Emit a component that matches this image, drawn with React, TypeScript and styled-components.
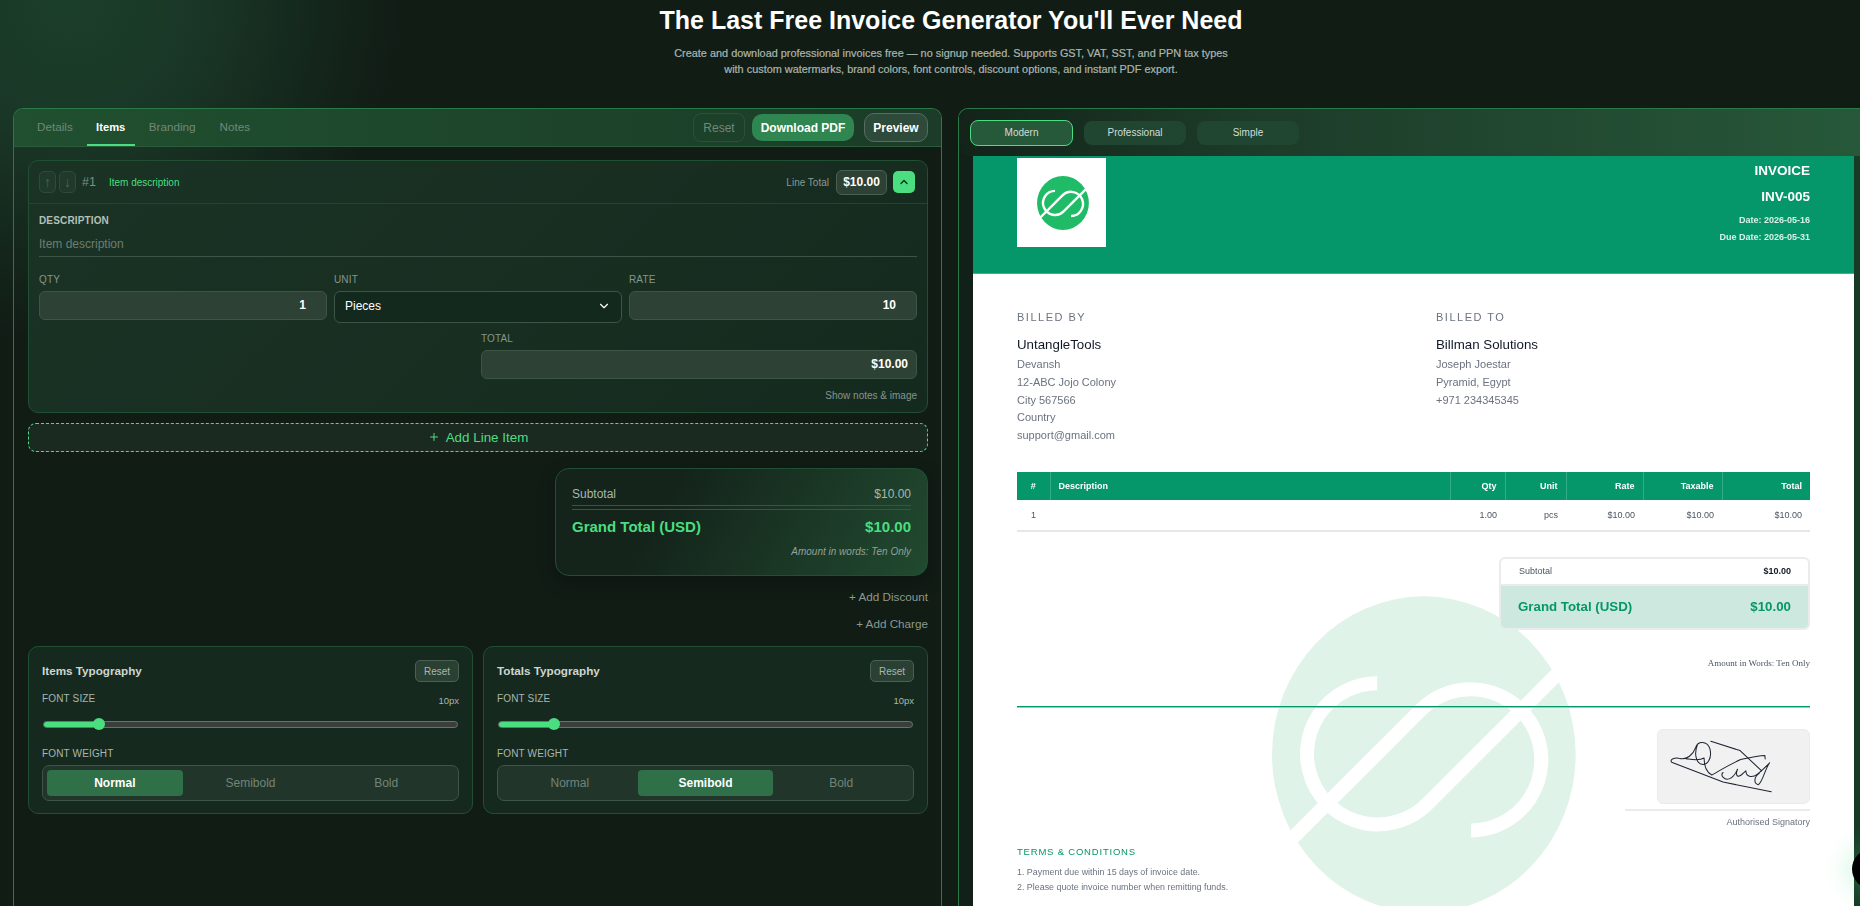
import styled, { createGlobalStyle } from 'styled-components'
import { ChevronDown, ChevronUp, Plus } from 'lucide-react'

const GlobalStyle = createGlobalStyle`
  html, body {
    margin: 0;
    height: 100%;
    overflow: hidden;
    background: #111c15;
  }
  * {
    box-sizing: border-box;
  }
  body {
    font-family: "Liberation Sans", Arial, sans-serif;
  }
`

const Page = styled.div`
  height: 100vh;
  display: flex;
  flex-direction: column;
  overflow: hidden;
  background:
    radial-gradient(ellipse 330px 340px at 70px 0, #1b3e2a 0%, #1a3827 35%, rgba(18, 30, 22, 0) 100%),
    #111c15;
`

const Hero = styled.header`
  height: 108px;
  flex: none;
  text-align: center;
  padding: 5px 0 0 42px;
`

const Title = styled.h1`
  margin: 0;
  font-size: 25px;
  line-height: 30px;
  font-weight: 700;
  color: #fff;
`

const Subtitle = styled.p`
  margin: 10px 0 0;
  font-size: 10.9px;
  line-height: 16px;
  font-weight: 400;
  color: #aab6ae;
  -webkit-text-stroke: 0.2px #aab6ae;
`

const Workspace = styled.main`
  flex: 1;
  min-height: 0;
  display: flex;
  gap: 16px;
  padding-left: 13px;
`

const EditorPanel = styled.section`
  width: 929px;
  flex: none;
  border: 1px solid #2a7a49;
  border-bottom: 0;
  border-radius: 10px 10px 0 0;
  overflow: hidden;
`

const TabBar = styled.div`
  height: 38px;
  display: flex;
  align-items: stretch;
  justify-content: space-between;
  padding: 0 13px;
  background: linear-gradient(90deg, #20502f, #1b3c28);
  border-bottom: 1px solid #2b5a3c;
`

const Tabs = styled.nav`
  display: flex;
  gap: 4px;
`

const Tab = styled.button<{ $active?: boolean }>`
  width: ${(p) => (p.$active ? '48px' : 'auto')};
  padding: ${(p) => (p.$active ? '0' : '0 10px')};
  background: none;
  border: 0;
  border-bottom: 2px solid ${(p) => (p.$active ? '#4ade80' : 'transparent')};
  font: ${(p) => (p.$active ? 700 : 400)} ${(p) => (p.$active ? '11.2px' : '11.7px')} "Liberation Sans", Arial, sans-serif;
  color: ${(p) => (p.$active ? '#fff' : '#71887a')};
`

const TabActions = styled.div`
  display: flex;
  align-items: center;
  gap: 7px;
`

const GhostButton = styled.button`
  width: 52px;
  height: 29px;
  border: 1px solid #2f4f3c;
  border-radius: 8px;
  background: none;
  font: 400 12px "Liberation Sans", Arial, sans-serif;
  color: #71887a;
`

const PrimaryButton = styled.button`
  width: 102px;
  height: 27px;
  border: 0;
  border-radius: 10px;
  background: #2f8650;
  font: 700 12px "Liberation Sans", Arial, sans-serif;
  color: #fff;
`

const PreviewButton = styled.button`
  width: 64px;
  height: 29px;
  margin-left: 3px;
  border: 1px solid #566d5f;
  border-radius: 10px;
  background: #2e4a3a;
  font: 700 12px "Liberation Sans", Arial, sans-serif;
  color: #fff;
`

const EditorBody = styled.div`
  padding: 13px 13px 13px 14px;
  display: flex;
  flex-direction: column;
`

const ItemCard = styled.article`
  border: 1px solid #214f34;
  border-radius: 10px;
  background: linear-gradient(135deg, #1a3325, #152a1e);
`

const ItemHead = styled.div`
  height: 43px;
  display: flex;
  align-items: center;
  padding: 0 12px 0 10px;
  border-bottom: 1px solid #254232;
`

const MoveButton = styled.span`
  width: 17px;
  height: 22px;
  margin-right: 3px;
  display: grid;
  place-items: center;
  border: 1px solid #2e4a3a;
  border-radius: 5px;
  background: #1f3a2a;
  font-size: 14px;
  color: #4f6558;
`

const ItemNumber = styled.span`
  margin-left: 3px;
  font-size: 12.5px;
  color: #7f8f85;
`

const ItemName = styled.span`
  margin-left: 13px;
  font-size: 10px;
  color: #4ade80;
`

const LineTotal = styled.div`
  margin-left: auto;
  display: flex;
  align-items: center;
`

const LineTotalLabel = styled.span`
  font-size: 10px;
  color: #8b998f;
`

const LineTotalValue = styled.span`
  width: 51px;
  height: 25px;
  margin-left: 7px;
  display: grid;
  place-items: center;
  border: 1px solid #4a6052;
  border-radius: 6px;
  background: #2d4135;
  font-size: 12px;
  font-weight: 700;
  color: #fff;
`

const CollapseButton = styled.span`
  width: 22px;
  height: 22px;
  margin-left: 6px;
  display: grid;
  place-items: center;
  border-radius: 5px;
  background: #4ade80;
  color: #0f2a1a;
`

const ItemBody = styled.div`
  padding: 11px 10px 10px;
`

const FieldLabel = styled.label<{ $strong?: boolean }>`
  display: block;
  font-size: 10px;
  line-height: 12px;
  font-weight: ${(p) => (p.$strong ? 700 : 400)};
  letter-spacing: 0.15px;
  color: ${(p) => (p.$strong ? '#b4c0b8' : '#87958c')};
`

const DescriptionInput = styled.div`
  height: 30px;
  padding-top: 10px;
  border-bottom: 1px solid #3d5547;
  font-size: 12px;
  line-height: 14px;
  color: #6d7d73;
`

const FieldGrid = styled.div`
  margin-top: 17px;
  display: grid;
  grid-template-columns: repeat(3, 1fr);
  column-gap: 7px;
  align-items: start;
`

const NumberField = styled.div`
  height: 29px;
  margin-top: 5px;
  padding: 0 20px 2px;
  display: flex;
  align-items: center;
  justify-content: flex-end;
  border: 1px solid #3d5546;
  border-radius: 6px;
  background: #2d4135;
  font-size: 12px;
  font-weight: 700;
  color: #fff;
`

const SelectField = styled.div`
  height: 32px;
  margin-top: 5px;
  padding: 0 10px 2px;
  display: flex;
  align-items: center;
  justify-content: space-between;
  border: 1px solid #3d5546;
  border-radius: 6px;
  background: #14291d;
  font-size: 12px;
  color: #fff;
`

const TotalField = styled.div`
  width: 436px;
  margin: 10px 0 0 auto;
`

const TotalValue = styled(NumberField)`
  padding: 0 8px 2px;
`

const NotesLink = styled.div`
  margin-top: 11px;
  text-align: right;
  font-size: 10px;
  line-height: 12px;
  color: #87958c;
`

const AddLineButton = styled.button`
  height: 29px;
  margin-top: 10px;
  padding-bottom: 2px;
  display: flex;
  align-items: center;
  justify-content: center;
  gap: 6px;
  border: 1px dashed #4ade80;
  border-radius: 8px;
  background: #1a2a20;
  font: 400 13.4px "Liberation Sans", Arial, sans-serif;
  color: #4ade80;
`

const TotalsCard = styled.div`
  width: 373px;
  height: 108px;
  margin: 16px 0 0 auto;
  padding: 18px 16px 0;
  border: 1px solid #214f34;
  border-radius: 14px;
  background: linear-gradient(120deg, #14241b 30%, #214a30);
  box-shadow: 0 6px 18px rgba(0, 0, 0, 0.25);
`

const TotalsRow = styled.div`
  display: flex;
  justify-content: space-between;
  font-size: 12px;
  line-height: 14px;
  color: #a9b6ae;
`

const TotalsRule = styled.div`
  height: 5px;
  margin-top: 4px;
  border-top: 1px solid #3a5345;
  border-bottom: 1px solid #3a5345;
`

const GrandRow = styled.div`
  margin-top: 8px;
  display: flex;
  justify-content: space-between;
  font-size: 15px;
  line-height: 18px;
  font-weight: 700;
  color: #4ade80;
`

const WordsRow = styled.div`
  margin-top: 10px;
  text-align: right;
  font-size: 10px;
  line-height: 12px;
  font-style: italic;
  color: #93a198;
`

const TextAction = styled.div<{ $gap: number }>`
  margin-top: ${(p) => p.$gap}px;
  text-align: right;
  font-size: 11.7px;
  line-height: 14px;
  color: #8b998f;
`

const TypographyGrid = styled.div`
  margin-top: 15px;
  display: grid;
  grid-template-columns: repeat(2, 1fr);
  column-gap: 10px;
`

const TypographyCard = styled.div`
  height: 168px;
  padding: 13px;
  border: 1px solid #214f34;
  border-radius: 10px;
  background: #16291e;
`

const TypographyHead = styled.div`
  height: 22px;
  display: flex;
  align-items: center;
  justify-content: space-between;
`

const TypographyTitle = styled.h3`
  margin: 0 0 1px;
  font-size: 11.7px;
  font-weight: 700;
  color: #cdd6d0;
`

const SmallReset = styled.button`
  width: 44px;
  height: 22px;
  border: 1px solid #4a6052;
  border-radius: 5px;
  background: #2a4033;
  font: 400 10px "Liberation Sans", Arial, sans-serif;
  color: #a9b6ae;
`

const SliderLabels = styled.div`
  margin-top: 11px;
  display: flex;
  justify-content: space-between;
  font-size: 10px;
  line-height: 12px;
  letter-spacing: 0.15px;
  color: #a9b6ae;
`

const SizeValue = styled.span`
  padding-top: 2px;
  font-size: 9.5px;
  letter-spacing: 0;
`

const Slider = styled.div`
  position: relative;
  height: 7px;
  margin: 14px 1px 0;
  border: 1px solid #6a726d;
  border-radius: 4px;
  background: #3a3f3c;
`

const SliderFill = styled.div<{ $value: number }>`
  width: ${(p) => p.$value}%;
  height: 100%;
  border-radius: 4px 0 0 4px;
  background: #4ade80;
`

const SliderThumb = styled.span<{ $value: number }>`
  position: absolute;
  top: -4px;
  left: ${(p) => p.$value}%;
  width: 12px;
  height: 12px;
  margin-left: -6px;
  border-radius: 50%;
  background: #4ade80;
`

const WeightLabel = styled(FieldLabel)`
  margin-top: 20px;
  color: #a9b6ae;
`

const Segments = styled.div`
  height: 36px;
  margin-top: 5px;
  padding: 4px;
  display: grid;
  grid-template-columns: repeat(3, 1fr);
  border: 1px solid #3d5546;
  border-radius: 7px;
  background: #22352a;
`

const Segment = styled.span<{ $active?: boolean }>`
  display: grid;
  place-items: center;
  border-radius: 4px;
  background: ${(p) => (p.$active ? '#2f7048' : 'transparent')};
  font-size: 12px;
  font-weight: ${(p) => (p.$active ? 700 : 400)};
  color: ${(p) => (p.$active ? '#fff' : '#718579')};
`

const PreviewPanel = styled.section`
  flex: 1;
  min-width: 0;
  display: flex;
  flex-direction: column;
  border: 1px solid #2a7a49;
  border-right: 0;
  border-bottom: 0;
  border-radius: 10px 0 0 0;
  background: linear-gradient(90deg, #112019, #173a25);
  overflow: hidden;
`

const TemplateBar = styled.div`
  height: 47px;
  flex: none;
  display: flex;
  align-items: center;
  gap: 11px;
  padding-left: 11px;
  background: linear-gradient(90deg, #13231a 0%, #1c3a28 30%, #27583a 100%);
  border-radius: 0 0 0 10px;
`

const TemplateChip = styled.button<{ $active?: boolean }>`
  width: ${(p) => (p.$active ? '103px' : '102px')};
  height: ${(p) => (p.$active ? '26px' : '24px')};
  border: ${(p) => (p.$active ? '1px solid #4ade80' : '0')};
  border-radius: 8px;
  background: ${(p) => (p.$active ? '#26583a' : '#204530')};
  font: 400 10px "Liberation Sans", Arial, sans-serif;
  color: #d4ddd7;
`

const Paper = styled.div`
  position: relative;
  flex: 1;
  min-height: 0;
  margin: 0 6px 0 14px;
  background: #fff;
  overflow: hidden;
`

const Watermark = styled.svg`
  position: absolute;
  left: 299px;
  top: 440px;
  width: 304px;
  height: 317px;
`

const PaperContent = styled.div`
  position: relative;
  z-index: 1;
`

const InvoiceHeader = styled.div`
  height: 118px;
  padding: 2px 44px 0;
  display: flex;
  justify-content: space-between;
  background: #059669;
  border-bottom: 1px solid #3fb18c;
`

const LogoBox = styled.div`
  width: 89px;
  height: 89px;
  padding-left: 3px;
  display: grid;
  place-items: center;
  background: #fff;
`

const LogoMark = styled.svg`
  width: 52px;
  height: 54px;
`

const InvoiceMeta = styled.div`
  padding-top: 6px;
  text-align: right;
  color: #fff;
`

const MetaTitle = styled.div`
  height: 26px;
  font-size: 13.5px;
  line-height: 14px;
  font-weight: 700;
`

const MetaDate = styled.div`
  height: 17px;
  font-size: 9px;
  line-height: 9px;
  font-weight: 700;
  color: #d9f1e8;
`

const InvoiceBody = styled.div`
  padding: 36px 44px 0;
`

const BillingGrid = styled.div`
  display: grid;
  grid-template-columns: 419px 1fr;
`

const BillingHeading = styled.div`
  font-size: 11px;
  line-height: 14px;
  letter-spacing: 1.5px;
  color: #6b7280;
`

const BillingName = styled.div`
  margin: 13px 0 3px;
  font-size: 13.3px;
  line-height: 16px;
  color: #111827;
`

const BillingLine = styled.div`
  font-size: 11px;
  line-height: 17.75px;
  color: #6b7280;
`

const InvoiceTable = styled.table`
  width: 793px;
  margin-top: 27px;
  border-collapse: collapse;
  table-layout: fixed;
  border-bottom: 2px solid #e5e7eb;
`

const HeadCell = styled.th<{ $align?: string; $width?: number }>`
  height: 28px;
  width: ${(p) => (p.$width ? `${p.$width}px` : 'auto')};
  padding: 0 8px;
  background: #059669;
  border-right: 1px solid #35ab85;
  font-size: 9px;
  font-weight: 700;
  text-align: ${(p) => p.$align ?? 'right'};
  color: #fff;
  &:last-child {
    border-right: 0;
  }
`

const BodyCell = styled.td<{ $align?: string }>`
  height: 31px;
  padding: 0 8px;
  font-size: 9px;
  text-align: ${(p) => p.$align ?? 'right'};
  color: #4b5563;
`

const TotalsBox = styled.div`
  width: 311px;
  margin: 25px 0 0 auto;
  border: 2px solid #e9ebee;
  border-radius: 6px;
  background: #fff;
  overflow: hidden;
`

const BoxRow = styled.div`
  height: 27px;
  padding: 0 17px 0 18px;
  display: flex;
  align-items: center;
  justify-content: space-between;
  border-bottom: 2px solid #e9ebee;
  font-size: 9px;
  color: #4b5563;
`

const BoxValue = styled.span`
  font-weight: 700;
  color: #111827;
`

const BoxGrand = styled.div`
  height: 42px;
  padding: 0 17px;
  display: flex;
  align-items: center;
  justify-content: space-between;
  background: #cde9df;
  font-size: 13.3px;
  font-weight: 700;
  color: #059669;
`

const WordsLine = styled.div`
  margin-top: 27px;
  text-align: right;
  font-family: "Liberation Serif", "Times New Roman", serif;
  font-size: 9px;
  line-height: 12px;
  color: #4b5563;
`

const GreenRule = styled.div`
  height: 2px;
  margin-top: 37px;
  background: #059669;
  border-bottom: 1px solid #8fd3bc;
`

const SignBlock = styled.div`
  width: 185px;
  margin: 21px 0 0 auto;
  text-align: right;
`

const SignBox = styled.div`
  width: 153px;
  height: 75px;
  margin-left: auto;
  border: 1px solid #e9ebee;
  border-radius: 6px;
  background: #f1f1f1;
`

const SignDrawing = styled.svg`
  display: block;
  width: 100%;
  height: 100%;
`

const SignCaption = styled.div`
  margin-top: 5px;
  padding-top: 5px;
  border-top: 2px solid #e9ebee;
  font-size: 9px;
  line-height: 12px;
  color: #6b7280;
`

const TermsHeading = styled.div`
  margin: 18px 0 7px;
  font-size: 9.5px;
  line-height: 12px;
  letter-spacing: 0.8px;
  color: #059669;
`

const TermsLine = styled.div`
  font-size: 8.9px;
  line-height: 15px;
  color: #6b7280;
`

const ChatBubble = styled.div`
  position: fixed;
  left: 1852px;
  top: 849px;
  width: 40px;
  height: 40px;
  border-radius: 50%;
  background: #000;
  box-shadow: 0 0 24px 6px rgba(74, 222, 128, 0.22);
`

type MarkProps = { disc: string }

function OrbitMark({ disc }: MarkProps) {
  return (
    <>
      <ellipse cx="478" cy="493" rx="456" ry="475" fill={disc} />
      <g fill="none" stroke="#fff" strokeWidth="42">
        <path d="M338 279A212 212 0 1 0 489 641L878 252" />
        <path d="M620 721A212 212 0 1 0 469 359L80 748" />
      </g>
    </>
  )
}

function TypographyPanel({ title, active }: { title: string; active: string }) {
  return (
    <TypographyCard>
      <TypographyHead>
        <TypographyTitle>{title}</TypographyTitle>
        <SmallReset>Reset</SmallReset>
      </TypographyHead>
      <SliderLabels>
        <span>FONT SIZE</span>
        <SizeValue>10px</SizeValue>
      </SliderLabels>
      <Slider>
        <SliderFill $value={13.3} />
        <SliderThumb $value={13.3} />
      </Slider>
      <WeightLabel>FONT WEIGHT</WeightLabel>
      <Segments>
        {['Normal', 'Semibold', 'Bold'].map((w) => (
          <Segment key={w} $active={w === active}>
            {w}
          </Segment>
        ))}
      </Segments>
    </TypographyCard>
  )
}

export default function App() {
  return (
    <Page>
      <GlobalStyle />
      <Hero>
        <Title>The Last Free Invoice Generator You'll Ever Need</Title>
        <Subtitle>
          Create and download professional invoices free — no signup needed. Supports GST, VAT, SST, and PPN tax types
          <br />
          with custom watermarks, brand colors, font controls, discount options, and instant PDF export.
        </Subtitle>
      </Hero>
      <Workspace>
        <EditorPanel>
          <TabBar>
            <Tabs>
              <Tab>Details</Tab>
              <Tab $active>Items</Tab>
              <Tab>Branding</Tab>
              <Tab>Notes</Tab>
            </Tabs>
            <TabActions>
              <GhostButton>Reset</GhostButton>
              <PrimaryButton>Download PDF</PrimaryButton>
              <PreviewButton>Preview</PreviewButton>
            </TabActions>
          </TabBar>
          <EditorBody>
            <ItemCard>
              <ItemHead>
                <MoveButton>↑</MoveButton>
                <MoveButton>↓</MoveButton>
                <ItemNumber>#1</ItemNumber>
                <ItemName>Item description</ItemName>
                <LineTotal>
                  <LineTotalLabel>Line Total</LineTotalLabel>
                  <LineTotalValue>$10.00</LineTotalValue>
                  <CollapseButton>
                    <ChevronUp size={12} strokeWidth={2.5} />
                  </CollapseButton>
                </LineTotal>
              </ItemHead>
              <ItemBody>
                <FieldLabel $strong>DESCRIPTION</FieldLabel>
                <DescriptionInput>Item description</DescriptionInput>
                <FieldGrid>
                  <div>
                    <FieldLabel>QTY</FieldLabel>
                    <NumberField>1</NumberField>
                  </div>
                  <div>
                    <FieldLabel>UNIT</FieldLabel>
                    <SelectField>
                      Pieces
                      <ChevronDown size={14} />
                    </SelectField>
                  </div>
                  <div>
                    <FieldLabel>RATE</FieldLabel>
                    <NumberField>10</NumberField>
                  </div>
                </FieldGrid>
                <TotalField>
                  <FieldLabel>TOTAL</FieldLabel>
                  <TotalValue>$10.00</TotalValue>
                </TotalField>
                <NotesLink>Show notes &amp; image</NotesLink>
              </ItemBody>
            </ItemCard>
            <AddLineButton>
              <Plus size={12} />
              Add Line Item
            </AddLineButton>
            <TotalsCard>
              <TotalsRow>
                <span>Subtotal</span>
                <span>$10.00</span>
              </TotalsRow>
              <TotalsRule />
              <GrandRow>
                <span>Grand Total (USD)</span>
                <span>$10.00</span>
              </GrandRow>
              <WordsRow>Amount in words: Ten Only</WordsRow>
            </TotalsCard>
            <TextAction $gap={14}>+ Add Discount</TextAction>
            <TextAction $gap={13}>+ Add Charge</TextAction>
            <TypographyGrid>
              <TypographyPanel title="Items Typography" active="Normal" />
              <TypographyPanel title="Totals Typography" active="Semibold" />
            </TypographyGrid>
          </EditorBody>
        </EditorPanel>
        <PreviewPanel>
          <TemplateBar>
            <TemplateChip $active>Modern</TemplateChip>
            <TemplateChip>Professional</TemplateChip>
            <TemplateChip>Simple</TemplateChip>
          </TemplateBar>
          <Paper>
            <Watermark viewBox="22 18 913 950">
              <OrbitMark disc="#dff3e8" />
            </Watermark>
            <PaperContent>
              <InvoiceHeader>
                <LogoBox>
                  <LogoMark viewBox="22 18 913 950">
                    <OrbitMark disc="#1fbb67" />
                  </LogoMark>
                </LogoBox>
                <InvoiceMeta>
                  <MetaTitle>INVOICE</MetaTitle>
                  <MetaTitle>INV-005</MetaTitle>
                  <MetaDate>Date: 2026-05-16</MetaDate>
                  <MetaDate>Due Date: 2026-05-31</MetaDate>
                </InvoiceMeta>
              </InvoiceHeader>
              <InvoiceBody>
                <BillingGrid>
                  <div>
                    <BillingHeading>BILLED BY</BillingHeading>
                    <BillingName>UntangleTools</BillingName>
                    <BillingLine>Devansh</BillingLine>
                    <BillingLine>12-ABC Jojo Colony</BillingLine>
                    <BillingLine>City 567566</BillingLine>
                    <BillingLine>Country</BillingLine>
                    <BillingLine>support@gmail.com</BillingLine>
                  </div>
                  <div>
                    <BillingHeading>BILLED TO</BillingHeading>
                    <BillingName>Billman Solutions</BillingName>
                    <BillingLine>Joseph Joestar</BillingLine>
                    <BillingLine>Pyramid, Egypt</BillingLine>
                    <BillingLine>+971 234345345</BillingLine>
                  </div>
                </BillingGrid>
                <InvoiceTable>
                  <thead>
                    <tr>
                      <HeadCell $align="center" $width={33}>#</HeadCell>
                      <HeadCell $align="left">Description</HeadCell>
                      <HeadCell $width={55}>Qty</HeadCell>
                      <HeadCell $width={61}>Unit</HeadCell>
                      <HeadCell $width={77}>Rate</HeadCell>
                      <HeadCell $width={79}>Taxable</HeadCell>
                      <HeadCell $width={88}>Total</HeadCell>
                    </tr>
                  </thead>
                  <tbody>
                    <tr>
                      <BodyCell $align="center">1</BodyCell>
                      <BodyCell $align="left" />
                      <BodyCell>1.00</BodyCell>
                      <BodyCell>pcs</BodyCell>
                      <BodyCell>$10.00</BodyCell>
                      <BodyCell>$10.00</BodyCell>
                      <BodyCell>$10.00</BodyCell>
                    </tr>
                  </tbody>
                </InvoiceTable>
                <TotalsBox>
                  <BoxRow>
                    <span>Subtotal</span>
                    <BoxValue>$10.00</BoxValue>
                  </BoxRow>
                  <BoxGrand>
                    <span>Grand Total (USD)</span>
                    <span>$10.00</span>
                  </BoxGrand>
                </TotalsBox>
                <WordsLine>Amount in Words: Ten Only</WordsLine>
                <GreenRule />
                <SignBlock>
                  <SignBox>
                    <SignDrawing viewBox="48 8 459 227">
                      <g fill="none" stroke="#1f2433" strokeWidth="3.2" strokeLinecap="round" strokeLinejoin="round">
                        <path d="M395 200L245 170L85 108C78 100 95 92 112 97C132 101 152 85 160 62C166 42 195 40 204 66C212 96 196 120 176 114C160 106 155 80 165 55" />
                        <path d="M130 97C150 100 170 105 186 95C186 120 195 140 210 148C225 140 270 112 300 100C330 93 355 87 375 87L376 98" />
                        <path d="M207 43L298 72L365 135" />
                        <path d="M245 140C235 150 250 165 264 160C278 155 285 142 290 130C282 150 290 160 308 142L316 135C316 158 340 155 352 145C365 135 380 120 390 110C375 130 368 170 355 178C340 175 340 155 358 142" />
                      </g>
                    </SignDrawing>
                  </SignBox>
                  <SignCaption>Authorised Signatory</SignCaption>
                </SignBlock>
                <TermsHeading>TERMS &amp; CONDITIONS</TermsHeading>
                <TermsLine>1. Payment due within 15 days of invoice date.</TermsLine>
                <TermsLine>2. Please quote invoice number when remitting funds.</TermsLine>
              </InvoiceBody>
            </PaperContent>
          </Paper>
        </PreviewPanel>
      </Workspace>
      <ChatBubble />
    </Page>
  )
}
